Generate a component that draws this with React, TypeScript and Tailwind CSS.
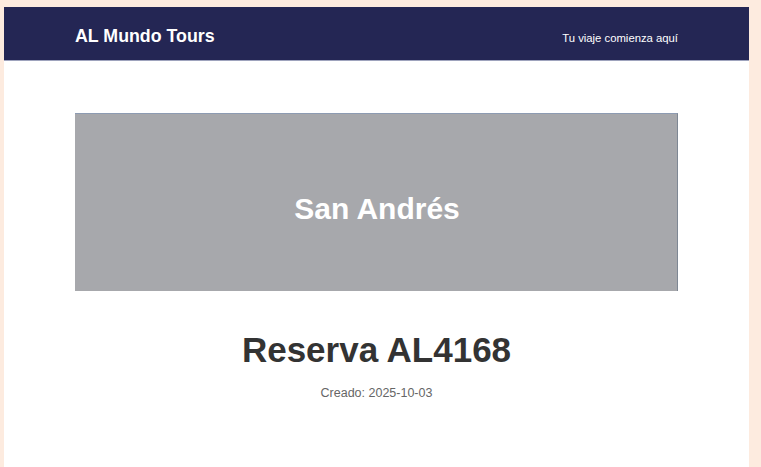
export default function App() {
  return (
    <div className="min-h-[467px] w-[761px] bg-[#fdebdf] pt-[7px] pl-[4px]" style={{ fontFamily: '"Liberation Sans", Arial, sans-serif' }}>
      <div className="w-[745px] h-[460px] bg-white">
        <div className="h-[54px] bg-[#242654] border-b border-[#9ea3bd] flex items-center justify-between px-[71px]">
          <span className="text-white font-bold text-[17.8px] leading-none mt-[7px]">AL Mundo Tours</span>
          <span className="text-white text-[11.3px] leading-none mt-[11px]">Tu viaje comienza aquí</span>
        </div>
        <div className="px-[71px] pt-[52px]">
          <div className="h-[178px] bg-[#a7a8ac] border-t border-t-[#8d9bb2] border-r border-r-[#7e8794] flex items-center justify-center">
            <span className="text-white font-bold text-[30px] leading-none mt-[12px] ml-[2px]">San Andrés</span>
          </div>
          <div className="flex flex-col items-center mt-[41px]">
            <h1 className="text-[#333333] font-bold text-[35px] leading-none">Reserva AL4168</h1>
            <p className="text-[#666666] text-[12.5px] leading-none mt-[20px]">Creado: 2025-10-03</p>
          </div>
        </div>
      </div>
    </div>
  );
}
